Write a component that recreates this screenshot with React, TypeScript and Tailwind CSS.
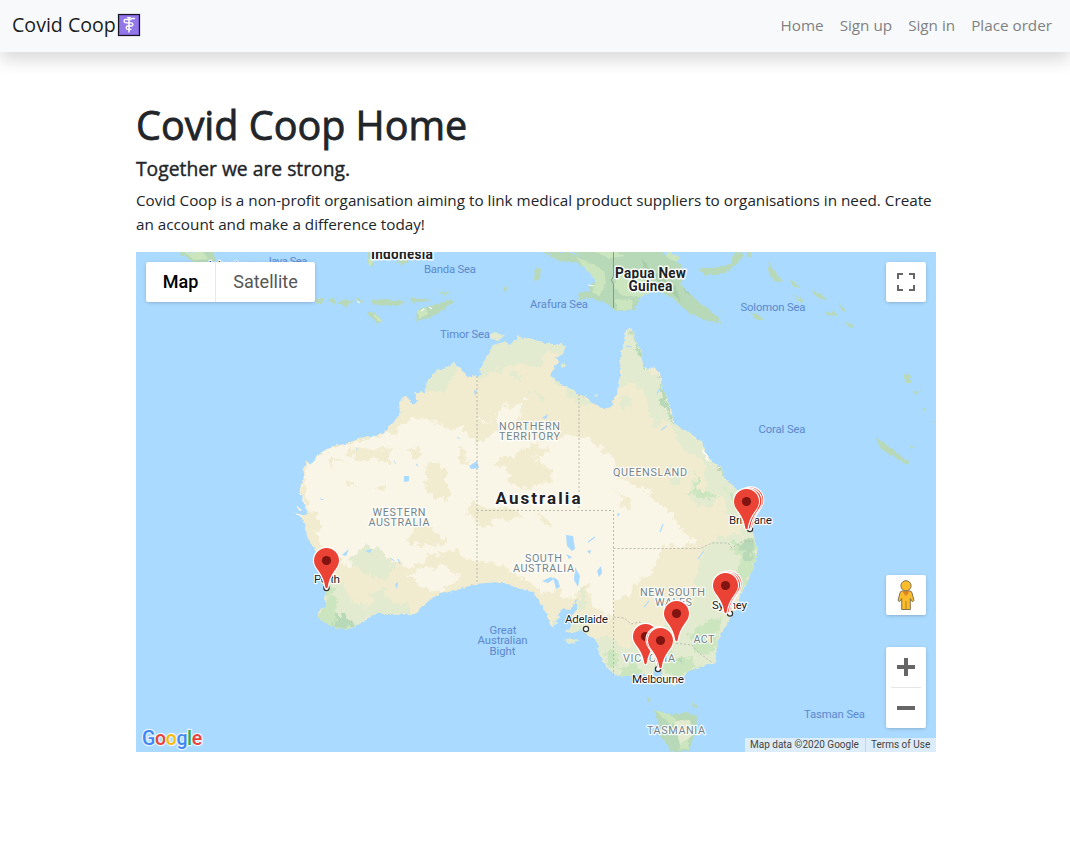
import React from "react";

const AUSTRALIA =
  "M477 376L482 375 479 370 482 366 486 358 489 353 492 347 496 344 505 342 510 345 514 341 517 339 518 335 523 339 530 338 538 341 550 344 560 344 566 346 564 351 561 355 556 358 558 362 555 367 550 375 556 381 563 386 571 389 579 394 586 397 593 403 603 409 608 408 612 405 617 393 618 385 620 377 620 365 621 353 625 340 626 330 630 328 633 332 636 343 641 350 642 360 643 367 647 370 653 367 660 373 662 387 667 397 672 413 673 422 683 430 688 432 702 442 706 453 712 462 717 465 722 468 723 475 727 480 737 490 745 495 748 502 750 528 755 538 757 552 755 562 747 583 740 595 737 607 727 623 718 640 715 663 703 666 687 672 680 682 673 683 664 677 658 668 653 676 640 673 627 677 615 675 605 665 599 653 598 645 595 640 587 634 580 630 572 634 565 631 571 628 571 618 577 609 577 599 570 610 562 608 557 622 552 627 546 613 538 600 533 592 520 589 502 582 487 583 475 584 457 590 437 595 423 605 415 614 390 615 380 613 372 615 358 625 350 629 335 628 327 623 318 618 318 612 325 607 326 590 323 570 315 550 307 537 305 523 299 515 308 515 305 503 300 490 301 482 305 477 303 468 307 460 310 465 320 453 337 444 345 445 353 441 367 436 375 437 383 433 393 423 400 413 399 402 407 396 413 405 417 401 415 392 425 392 427 382 432 377 437 370 445 369 453 363 459 366 463 372 468 378 475 375Z";

const DESERT =
  "M320 455L338 446 365 441 393 432 418 417 437 422 450 430 462 428 477 445 485 440 500 433 515 425 548 443 573 433 590 441 613 457 617 477 650 493 667 517 663 543 650 573 636 586 625 603 610 617 603 610 593 607 587 583 578 591 570 600 560 590 547 593 527 580 512 570 490 563 470 560 450 550 430 555 422 565 410 568 395 562 390 557 375 561 350 565 335 558 327 550 315 535 308 520 308 505 303 488 306 470Z";

const MARKERS: [number, number][] = [
  [326.5, 560.5],
  [750.8, 500], [749, 501], [746.5, 501.5],
  [729, 584], [727.5, 585], [725.5, 585.5],
  [676.5, 613.5],
  [645.5, 636.5],
  [659, 640], [660.5, 640.5],
];

function Marker({ x, y }: { x: number; y: number }) {
  return (
    <g transform={`translate(${x} ${y})`}>
      <path
        d="M0 -12.6C-7 -12.6 -12.5 -7 -12.5 0C-12.5 4 -10.8 6.5 -7.8 10.5C-4.2 15.5 -2.1 20 -1.2 26.5Q0 29 1.2 26.5C2.1 20 4.2 15.5 7.8 10.5C10.8 6.5 12.5 4 12.5 0C12.5 -7 7 -12.6 0 -12.6Z"
        fill="#ea4335"
        stroke="#fff"
        strokeWidth="2.2"
        paintOrder="stroke"
      />
      <circle r="4.6" fill="#811411" />
    </g>
  );
}

type LabelProps = { x: number; y: number; w?: number; children: string };

const Sea = ({ x, y, w, children }: LabelProps) => (
  <text x={x} y={y} textLength={w} textAnchor="middle" fontSize="11.3" fill="#5c88cd">{children}</text>
);
const Region = ({ x, y, w, children }: LabelProps) => (
  <text x={x} y={y} textLength={w} textAnchor="middle" fontSize="10.8" fill="#73858b" stroke="#fff" strokeOpacity=".9" strokeWidth="2.4" strokeLinejoin="round" paintOrder="stroke">{children}</text>
);
const City = ({ x, y, w, children }: LabelProps) => (
  <text x={x} y={y} textLength={w} textAnchor="middle" fontSize="11.7" fill="#202124" stroke="#fff" strokeOpacity=".9" strokeWidth="2.4" strokeLinejoin="round" paintOrder="stroke">{children}</text>
);
const Country = ({ x, y, w, size = 13.8, children }: LabelProps & { size?: number }) => (
  <text x={x} y={y} textLength={w} textAnchor="middle" fontSize={size} fontWeight="700" fill="#202124" stroke="#fff" strokeOpacity=".9" strokeWidth="3" strokeLinejoin="round" paintOrder="stroke">{children}</text>
);

function MapDrawing() {
  return (
    <svg className="block h-full w-full" viewBox="136 252 800 500" fontFamily="Roboto, sans-serif">
      <defs>
        <clipPath id="land"><path d={AUSTRALIA} /></clipPath>
        <filter id="rough" x="-5%" y="-5%" width="110%" height="110%">
          <feTurbulence type="fractalNoise" baseFrequency=".13" numOctaves="3" seed="4" />
          <feDisplacementMap in="SourceGraphic" scale="13" xChannelSelector="R" yChannelSelector="G" />
        </filter>
        <filter id="coast" x="-5%" y="-5%" width="110%" height="110%">
          <feTurbulence type="fractalNoise" baseFrequency=".25" numOctaves="2" seed="9" />
          <feDisplacementMap in="SourceGraphic" scale="4" xChannelSelector="R" yChannelSelector="G" />
        </filter>
      </defs>
      <rect x="136" y="252" width="800" height="500" fill="#aadaff" />

      <g filter="url(#coast)">
        <g clipPath="url(#land)">
          <rect x="290" y="320" width="480" height="370" fill="#f1ebcf" />
          <g filter="url(#rough)">
            <path d={DESERT} fill="#faf6e7" />
            <path d="M405 575L425 567 447 568 460 575 453 585 430 592 423 588Z" fill="#faf6e7" />
            <path d="M496 415L503 405 510 408 520 405 522 413 512 423 499 426Z" fill="#faf6e7" />
            <path d="M642 510L655 503 672 512 682 530 695 540 680 548 655 545Z" fill="#faf6e7" />

            <g fill="#f1ebcf">
              <path d="M347 446L358 447 366 450 388 447 390 462 376 460 364 461 348 455Z" />
              <path d="M329 455L341 458 332 462 336 472 329 464Z" />
              <path d="M426 466L436 463 446 467 445 480 452 488 447 503 440 498 428 494 424 482Z" />
              <path d="M407 451L419 449 424 453 413 457Z" />
              <path d="M459 450L468 453 463 460 472 463 459 464Z" />
              <path d="M493 461L506 459 517 453 533 444 546 447 551 451 535 458 551 470 550 482 526 488 510 483 514 475 500 466Z" />
              <path d="M468 505L485 510 510 508 522 515 509 520 489 517 470 520Z" />
              <path d="M536 512L547 519 549 526 541 522Z" />
              <path d="M610 485L620 493 633 500 630 510 621 506 625 500Z" />
              <path d="M413 527L430 525 436 535 449 538 440 545 420 547 408 541Z" />
              <path d="M308 510L320 513 320 528 309 532Z" />
              <path d="M346 481L356 484 350 486Z" />
              <path d="M378 489L387 484 383 492Z" />
              <path d="M614 600L632 596 647 581 662 568 665 577 642 600 635 615 613 616Z" />
              <path d="M470 500L484 507 492 528 476 522Z" />
            </g>

            <g fill="#e2ebcf">
              <path d="M477 378L480 350 498 340 518 330 568 340 564 358 548 350 540 365 515 363 500 369 487 375Z" />
              <path d="M418 394L425 375 450 361 459 364 446 390 427 393Z" />
              <path d="M528 389L542 397 545 401 533 397Z" />
              <path d="M510 373L524 374 520 379 512 377Z" />
              <path d="M547 373L579 393 594 403 592 407 575 402Z" />
              <path d="M620 390L619 345 628 326 642 349 644 369 661 375 674 430 658 415 641 389 630 380Z" />
              <path d="M615 401L628 393 635 405 625 410Z" />
              <path d="M648 394L664 419 656 427 648 413Z" />
              <path d="M670 422L688 430 706 451 725 478 751 499 754 539 732 525 725 500 707 485 700 459 680 446Z" />
              <path d="M690 478L704 491 712 480 717 498 707 509 688 498Z" />
              <path d="M672 465L681 475 680 488 673 484Z" />
              <path d="M713 540L735 532 757 539 756 561 720 635 714 668 675 685 610 678 593 640 608 635 622 649 650 639 665 620 685 603 695 591 697 569 704 551Z" />
              <path d="M316 618L329 573 340 583 355 603 370 606 374 592 383 590 392 602 408 603 412 614 370 617 350 631Z" />
              <path d="M350 560L366 545 382 552 395 565 387 579 365 575Z" />
              <path d="M550 624L560 615 578 618 590 637 572 635Z" />
              <path d="M577 591L586 586 587 607 580 609Z" />
            </g>
            <g fill="#cbe6be">
              <path d="M317 616L325 606 328 585 336 597 337 616 355 627 330 630Z" />
              <path d="M694 471L700 489 717 495 713 499 700 496 687 494 696 488Z" />
              <path d="M724 487L730 492 748 503 750 510 738 506Z" />
              <path d="M731 544L758 538 755 570 740 595 733 575 742 561Z" />
              <path d="M690 635L710 620 722 617 714 653 698 654Z" />
              <path d="M615 669L635 662 644 675 622 678Z" />
              <path d="M656 653L669 650 674 658 690 657 700 666 678 678 662 669Z" />
              <path d="M722 576L730 593 731 604 719 597Z" />
              <path d="M607 651L614 650 618 664 610 669Z" />
            </g>
            <g fill="#b8d9b7">
              <path d="M630 328L637 341 642 352 644 370 639 359 634 339Z" />
              <path d="M660 373L664 386 671 412 675 426 666 412 660 399Z" />
              <path d="M740 544L755 540 751 563 744 559Z" />
              <path d="M333 617L342 614 355 624 338 627Z" />
              <path d="M716 464L724 472 723 477Z" />
              <path d="M677 659L685 655 683 667Z" />
            </g>
            <g fill="#fffdf3">
              <path d="M700 450L709 456 710 463 705 458Z" />
              <path d="M524 397L529 400 524 402Z" />
              <path d="M477 419L490 421 482 423Z" />
              <path d="M664 442L669 445 667 448Z" />
            </g>
          </g>
        </g>
      </g>

      <g fill="#aadaff">
        <path d="M469 466L477 461 479 468 471 469Z" />
        <path d="M404 476L409 476 409 481 404 482Z" />
        <path d="M566 535L573 536 575 549 572 551 567 546Z" />
        <path d="M575 567L580 576 578 587 574 580Z" />
        <path d="M553 577L558 580 560 587 556 589Z" />
        <path d="M542 581L551 577 554 579 548 583Z" />
        <path d="M597 571L601 566 602 573 599 577Z" />
        <path d="M365 551L372 549 370 553Z" />
        <path d="M390 557L396 562 392 560Z M342 555L349 549 346 556Z M395 584L398 582 397 589Z" />
        <path d="M542 418L548 414 546 419Z M617 514L620 513 618 517Z M587 551L591 550 590 554Z" />
        <path d="M654 669L662 668 662 674 655 675Z M474 391L477 390 475 396Z" />
        <path d="M394 460L396 463 395 464Z M417 463L418 467 416 465Z M458 437L461 439 457 438Z" />
        <path d="M566 554L572 557 569 559Z M356 447L358 451 356 449Z M320 498L324 500 321 500Z" />
      </g>
      <path d="M588 542L595 537M398 559L400 564M661 430L667 426M660 532L663 524M626 346L632 347M660 388L657 394M644 607L649 601M698 559L704 551" fill="none" stroke="#aadaff" strokeWidth="1.1" />

      <g filter="url(#coast)">
        <g fill="#b8d9b7">
          <path d="M179 252L214 252 215 261 203 265 189 260Z" />
          <path d="M543 252L569 252 583 258 602 264 618 263 635 257 661 252 668 258 681 264 684 275 681 286 692 296 701 304 712 311 722 323 704 320 688 312 670 296 658 292 645 290 641 297 634 310 616 311 604 302 591 298 577 300 579 293 589 292 590 285 597 281 590 271 577 263 561 261Z" />
          <path d="M569 250L665 250 655 262 630 268 600 268Z" />
          <path d="M698 268L714 268 731 264 735 252 744 253 738 263 724 274 704 275Z" />
          <path d="M747 252L751 252 751 258 747 256Z M768 263L776 272 783 281 776 282 769 274Z M789 280L797 284 801 288 794 287Z M811 290L822 295 828 301 817 297Z M825 311L836 313 838 316 828 315Z M838 300L846 312 842 311Z M845 321L855 327 850 328Z" />
          <path d="M795 298L805 300 802 303Z M718 310L724 315 720 311Z M751 312L762 317 764 322 753 318Z M794 295L803 298 795 297Z" />
          <path d="M313 299L324 299 321 304 315 303Z M328 301L334 298 335 304Z M337 303L346 299 354 301 345 307Z M355 298L363 300 362 304Z M372 300L385 299 407 302 392 306 374 305Z M410 298L433 300 413 303Z M439 292L451 292 445 295Z M457 300L440 304 429 306Z" />
          <path d="M364 312L374 312 384 321 376 323 371 317Z M415 321L419 309 430 306 450 300 456 301 444 309 430 318Z" />
          <path d="M368 252L374 252 373 267 368 264Z M396 261L403 259 410 261 402 265Z M535 268L541 269 540 279 534 281Z M503 288L507 286 504 294Z" />
          <path d="M903 373L911 376 911 384 906 382Z M911 389L917 392 916 396Z M921 385L923 393 921 391Z M876 439L883 441 895 451 909 461 907 465 894 457 880 448Z M910 445L914 449 911 449Z M923 407L926 409 924 411Z M932 421L936 422 935 424Z" />
          <path d="M655 710L672 715 686 712 697 716 696 733 688 751 672 752 660 735Z M691 700L697 706 698 709 693 706Z M647 696L650 700 647 703Z" />
        </g>
        <g fill="#cbe6be">
          <path d="M576 257L590 263 604 270 606 283 600 296 592 292 596 281 582 265Z" />
          <path d="M617 271L640 277 655 291 640 297 624 296 614 288Z" />
          <path d="M590 250L612 250 625 256 610 258Z M668 250L680 258 676 262 666 257Z" />
          <path d="M184 252L203 252 207 259 195 260Z M655 710L668 714 676 719 672 726Z M678 732L690 730 688 750 680 749Z M615 299L633 300 632 310 617 310Z" />
          <path d="M418 311L426 308 428 314 418 319Z M369 258L374 260 370 267Z M372 313L383 320 378 321Z" />
        </g>
        <g fill="#e2ebcf">
          <path d="M489 336L494 333 505 335 499 340 490 339Z M561 366L564 363 566 366 562 368Z M594 396L598 393 597 397Z" />
          <path d="M563 640L572 638 580 641 569 644Z M668 682L675 681 675 686Z M674 721L690 720 693 735 680 744Z" />
        </g>
        <path d="M641 258L650 269 662 278 675 286 680 300 687 307 676 297 667 287 646 273Z M684 288L692 296 686 293Z" fill="#a8cda9" />
        <path d="M297 506L301 511M296 513L301 516" fill="none" stroke="#faf6e7" strokeWidth="1.1" />
        <path d="M303 483L300 493 305 504" fill="none" stroke="#faf6e7" strokeWidth="1.2" />
      </g>
      <path d="M588 285L594 286M432 309L429 307M421 311L424 309M357 301L360 303" stroke="#fff" strokeOpacity=".85" strokeWidth="1.2" fill="none" />

      <path d="M477 376V584M477 510.5H613.5V675M613.5 548.5H700L712 543 728 543 732 548 743 541 755 542M579 394V510M613.5 617L624 618 631 624 640 622 652 635 674 643 692 645 699 653 713 663" fill="none" stroke="#b9bbaf" strokeWidth="1" strokeDasharray="2 2" />
      <path d="M613.5 252V276L611.5 280 613.5 284V308" fill="none" stroke="#879b86" strokeWidth="1" />

      <Country x={402} y={259} w={62}>Indonesia</Country>
      <Country x={650.5} y={278} w={71}>Papua New</Country>
      <Country x={650.5} y={291} w={44}>Guinea</Country>
      <Country x={538} y={504} w={85} size={17}>Australia</Country>

      <City x={225} y={269}>Jakarta</City>
      <Sea x={286.5} y={265} w={42}>Java Sea</Sea>
      <Sea x={450} y={273} w={52}>Banda Sea</Sea>
      <Sea x={559} y={308} w={58}>Arafura Sea</Sea>
      <Sea x={465} y={338} w={50}>Timor Sea</Sea>
      <Sea x={773} y={311} w={65}>Solomon Sea</Sea>
      <Sea x={782} y={433} w={47}>Coral Sea</Sea>
      <Sea x={834.5} y={718} w={61}>Tasman Sea</Sea>
      <Sea x={503} y={634} w={27}>Great</Sea>
      <Sea x={502.5} y={644} w={50}>Australian</Sea>
      <Sea x={502.5} y={655} w={26}>Bight</Sea>

      <Region x={529.5} y={430} w={61}>NORTHERN</Region>
      <Region x={529.5} y={440} w={61}>TERRITORY</Region>
      <Region x={650} y={476} w={74}>QUEENSLAND</Region>
      <Region x={399} y={516} w={53}>WESTERN</Region>
      <Region x={399} y={526} w={61}>AUSTRALIA</Region>
      <Region x={543.5} y={562} w={37}>SOUTH</Region>
      <Region x={543.5} y={572} w={61}>AUSTRALIA</Region>
      <Region x={672.5} y={596} w={65}>NEW SOUTH</Region>
      <Region x={673.5} y={606} w={37}>WALES</Region>
      <Region x={704} y={643} w={21}>ACT</Region>
      <Region x={649} y={662} w={52}>VICTORIA</Region>
      <Region x={676} y={734} w={58}>TASMANIA</Region>

      <g fill="#fff" stroke="#303030" strokeWidth="1.2">
        <circle cx="326.5" cy="588" r="2.6" />
        <circle cx="586" cy="629" r="2.6" />
        <circle cx="750" cy="529" r="2.6" />
        <circle cx="730" cy="613.5" r="2.6" />
        <circle cx="658" cy="669" r="2.6" />
      </g>
      <City x={327} y={583} w={26}>Perth</City>
      <City x={586.5} y={623} w={43}>Adelaide</City>
      <City x={750.5} y={524} w={43}>Brisbane</City>
      <City x={729.5} y={609} w={35}>Sydney</City>
      <City x={658} y={683} w={52}>Melbourne</City>

      {MARKERS.map(([x, y]) => <Marker key={`${x}-${y}`} x={x} y={y} />)}
    </svg>
  );
}

function BrandIcon() {
  return (
    <svg className="h-[24px] w-[24px]" viewBox="0 0 24 24">
      <rect x=".5" y=".5" width="23" height="23" fill="#c9c9cc" />
      <rect x="1" y="1" width="22" height="22" fill="#17151f" />
      <rect x="2" y="2" width="20" height="20" fill="#7b5fd3" />
      <rect x="3" y="3" width="18" height="18" fill="#9277e8" />
      <path d="M12 4V19.5" stroke="#fff" strokeWidth="1.5" />
      <path d="M18 5.5H15L13.5 6.5H9.5C6.3 5.6 6.3 9.8 9.5 9.8H14C16.6 9.8 16.6 13 14 13H11C8.6 13 8.6 16.3 11 16.3H14.5" fill="none" stroke="#fff" strokeWidth="1.3" />
      <path d="M10 4.6H14" stroke="#fff" strokeWidth="1.3" />
    </svg>
  );
}

function Pegman() {
  return (
    <svg className="h-[32px] w-[20px]" viewBox="0 0 20 32">
      <path d="M6.2 12H13.8Q15.6 12 16 14L18 21.5 16.3 22.6 14.3 19.5V30.5H5.7V19.5L3.7 22.6 2 21.5 4 14Q4.4 12 6.2 12Z" fill="#fbbc2c" stroke="#7e7355" strokeWidth="1" />
      <path d="M6.3 12.3H13.7L10 17.2Z" fill="#e08327" />
      <path d="M10 22V30" stroke="#b58220" strokeWidth="1" />
      <circle cx="10" cy="6.8" r="5.1" fill="#fbbc2c" stroke="#7e7355" strokeWidth="1" />
    </svg>
  );
}

function GoogleLogo() {
  return (
    <div className="absolute bottom-[1px] left-[6px] whitespace-nowrap font-[Roboto,sans-serif] text-[19.5px] font-medium leading-[25px] tracking-[-0.35px] [-webkit-text-stroke:2.5px_#e4f3ff] [paint-order:stroke_fill]">
      <span className="text-[#4285f4]">G</span>
      <span className="text-[#ea4335]">o</span>
      <span className="text-[#fbbc05]">o</span>
      <span className="text-[#4285f4]">g</span>
      <span className="text-[#34a853]">l</span>
      <span className="text-[#ea4335]">e</span>
    </div>
  );
}

const LINKS = ["Home", "Sign up", "Sign in", "Place order"];

export default function App() {
  return (
    <div className="min-h-[854px] bg-white font-['Open_Sans','Noto_Sans',sans-serif] text-[#212529]">
      <nav className="flex h-[52px] items-center justify-between bg-[#f8f9fb] pb-[2px] pl-3 pr-[18px] shadow-[0_8px_16px_rgba(0,0,0,0.15)]">
        <a className="flex items-center text-[19.6px] leading-[30px] text-[#1b1d20]">
          <span className="w-[105px] whitespace-nowrap">Covid Coop</span>
          <BrandIcon />
        </a>
        <div className="flex gap-4 pb-[1px] text-[15.25px] leading-6 text-[#808182]">
          {LINKS.map((l) => <a key={l} className="whitespace-nowrap">{l}</a>)}
        </div>
      </nav>

      <main className="ml-[136px] w-[800px] pt-[49px]">
        <h1 className="mb-2 whitespace-nowrap text-[39.5px] leading-[48px] [-webkit-text-stroke:0.8px_#212529]">Covid Coop Home</h1>
        <h2 className="mb-2 text-[19.3px] leading-[24px] [-webkit-text-stroke:0.4px_#212529]">Together we are strong.</h2>
        <p className="mb-4 -mt-[1px] whitespace-nowrap text-[15.25px] leading-6">
          Covid Coop is a non-profit organisation aiming to link medical product suppliers to organisations in need. Create
          <br />
          an account and make a difference today!
        </p>

        <section className="relative h-[500px] w-[800px] overflow-hidden font-[Roboto,sans-serif]">
          <MapDrawing />
          <div className="absolute left-[10px] top-[10px] flex h-10 overflow-hidden rounded-[2px] bg-white text-[18px] leading-10 shadow-[0_1px_4px_-1px_rgba(0,0,0,0.3)]">
            <button className="w-[70px] border-r border-[#e9e9e9] font-medium text-black">Map</button>
            <button className="w-[99px] text-[#565656]">Satellite</button>
          </div>
          <button className="absolute right-[10px] top-[10px] flex h-10 w-10 items-center justify-center rounded-[2px] bg-white shadow-[0_1px_4px_-1px_rgba(0,0,0,0.3)]">
            <svg className="h-[18px] w-[18px]" viewBox="0 0 18 18">
              <path d="M1 6V1H6M12 1H17V6M17 12V17H12M6 17H1V12" fill="none" stroke="#666" strokeWidth="2" />
            </svg>
          </button>
          <button className="absolute right-[10px] top-[323px] flex h-10 w-10 items-center justify-center rounded-[2px] bg-white shadow-[0_1px_4px_-1px_rgba(0,0,0,0.3)]">
            <Pegman />
          </button>
          <div className="absolute right-[10px] top-[395px] flex h-[81px] w-10 flex-col items-center rounded-[2px] bg-white shadow-[0_1px_4px_-1px_rgba(0,0,0,0.3)]">
            <button className="flex h-10 items-center">
              <svg className="h-[18px] w-[18px]" viewBox="0 0 18 18"><path d="M9 0V18M0 9H18" stroke="#666" strokeWidth="4" /></svg>
            </button>
            <div className="h-px w-[30px] bg-[#e6e6e6]" />
            <button className="flex h-10 items-center">
              <svg className="h-[18px] w-[18px]" viewBox="0 0 18 18"><path d="M0 9H18" stroke="#666" strokeWidth="4" /></svg>
            </button>
          </div>
          <GoogleLogo />
          <div className="absolute bottom-0 right-0 flex h-[14px] w-[191px] bg-[#dcecf8] text-[10px] leading-[14px] text-[#444]">
            <span className="w-[120px] whitespace-nowrap pl-[5px]">Map data ©2020 Google</span>
            <span className="flex-1 whitespace-nowrap border-l border-[#b3dcfa] pl-[5px]">Terms of Use</span>
          </div>
        </section>
      </main>
    </div>
  );
}
